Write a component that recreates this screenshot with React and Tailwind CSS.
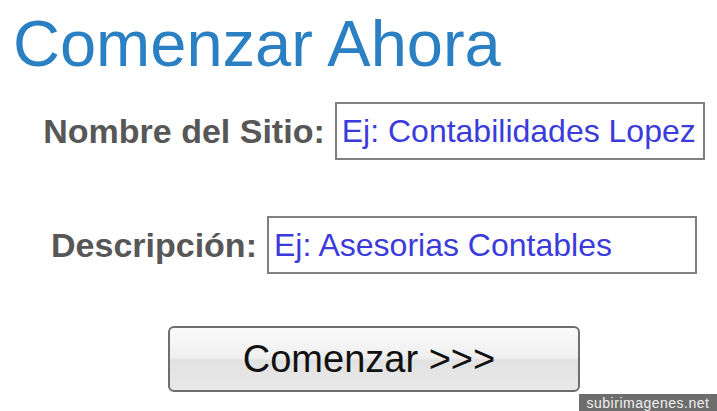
export default function App() {
  return (
    <div className="relative h-[411px] w-[717px] overflow-hidden bg-white font-['Liberation_Sans',Arial,sans-serif]">
      <div className="w-[748px]">
        <h1 className="pl-[13px] pt-[12px] text-[65px] font-normal leading-[64px] text-[#2b7fc3]">
          Comenzar Ahora
        </h1>
        <div className="mt-[26px] flex items-center justify-center gap-[10px]">
          <label className="text-[34px] font-bold leading-none text-[#575757]">Nombre del Sitio:</label>
          <input
            readOnly
            defaultValue="Ej: Contabilidades Lopez"
            className="h-[58px] w-[370px] border-2 border-[#808080] bg-white px-[5px] text-[32px] text-[#3b3bdc] outline-none"
          />
        </div>
        <div className="mt-[56px] flex items-center justify-center gap-[10px]">
          <label className="text-[34px] font-bold leading-none text-[#575757]">Descripción:</label>
          <input
            readOnly
            defaultValue="Ej: Asesorias Contables"
            className="h-[58px] w-[430px] border-2 border-[#808080] bg-white px-[5px] text-[32px] text-[#3b3bdc] outline-none"
          />
        </div>
        <div className="mt-[52px] flex justify-center">
          <button className="h-[66px] w-[412px] rounded-[6px] border-2 border-[#6e6e6e] bg-[linear-gradient(to_bottom,#fafafa_0%,#efefef_48%,#e2e2e2_52%,#e8e8e8_100%)] pr-[10px] text-[38px] leading-none text-[#111]">
            Comenzar &gt;&gt;&gt;
          </button>
        </div>
      </div>
      <div className="absolute left-[579px] top-[394px] flex h-[17px] w-[138px] items-center justify-center bg-[#6d6d6d] text-[14px] leading-none tracking-[0.5px] text-[#f0f0f0]">
        subirimagenes.net
      </div>
    </div>
  );
}
